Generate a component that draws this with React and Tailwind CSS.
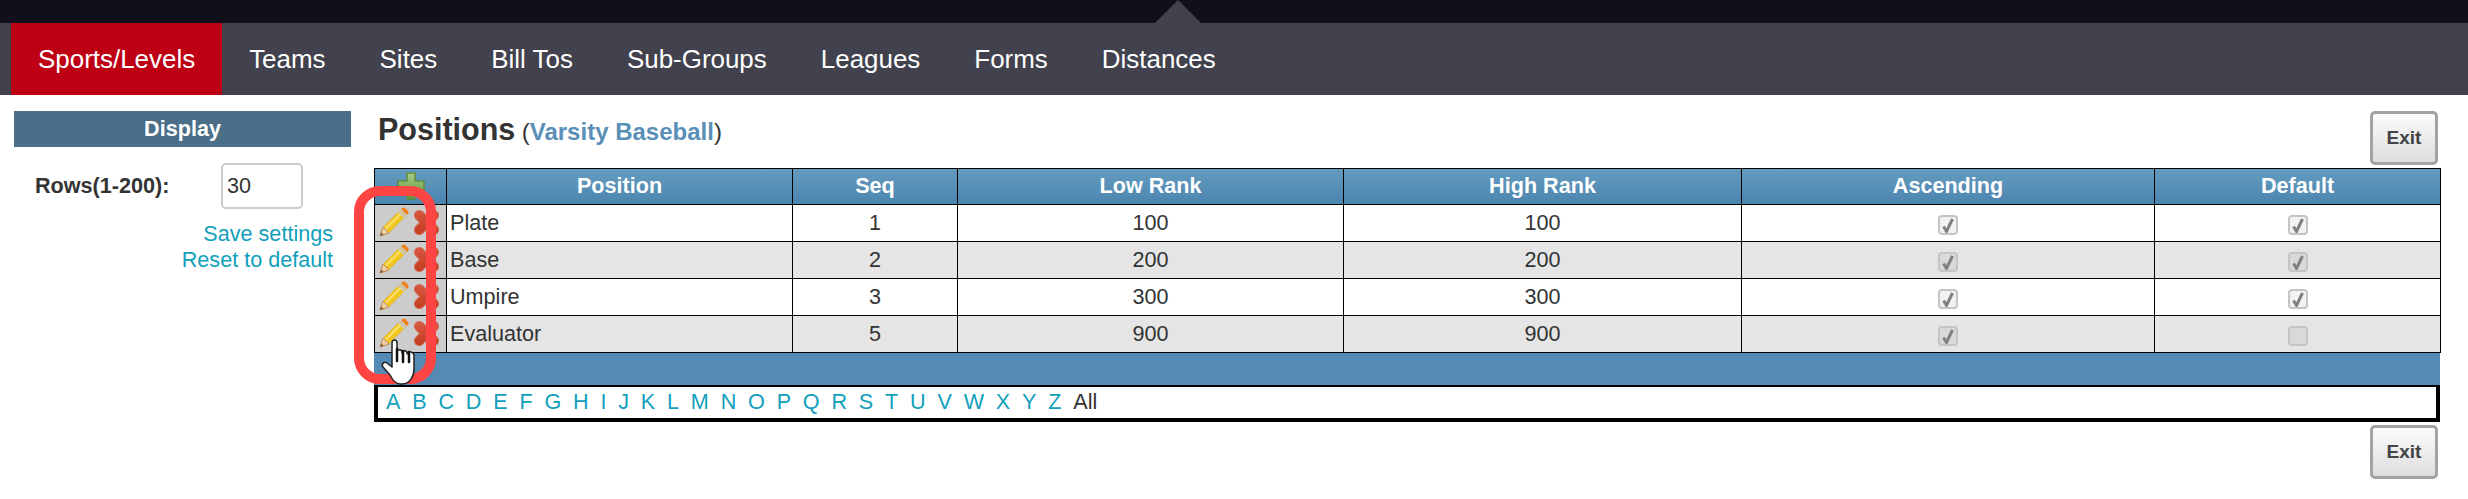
const tabs = ["Sports/Levels", "Teams", "Sites", "Bill Tos", "Sub-Groups", "Leagues", "Forms", "Distances"];

const rows = [
  { name: "Plate", seq: 1, low: 100, high: 100, asc: true, def: true },
  { name: "Base", seq: 2, low: 200, high: 200, asc: true, def: true },
  { name: "Umpire", seq: 3, low: 300, high: 300, asc: true, def: true },
  { name: "Evaluator", seq: 5, low: 900, high: 900, asc: true, def: false },
];

const letters = "ABCDEFGHIJKLMNOPQRSTUVWXYZ".split("");

const PlusIcon = () => (
  <svg width="30" height="30" viewBox="0 0 30 30" className="block">
    <defs>
      <linearGradient id="plusFill" x1="0" y1="0" x2="0" y2="1">
        <stop offset="0" stopColor="#a9c98a" />
        <stop offset="1" stopColor="#5f9a3a" />
      </linearGradient>
    </defs>
    <path d="M11 2h8v8h9v9h-9v9h-8v-9H2v-9h9z" fill="url(#plusFill)" stroke="#5f8f3c" strokeWidth="1.5" strokeLinejoin="round" />
  </svg>
);

const PencilIcon = () => (
  <svg width="30" height="30" viewBox="0 0 30 30" className="block shrink-0">
    <path d="M1 29l3-9L21 3l6 6L10 26z" fill="#f0c51e" stroke="#c9b98c" strokeWidth="0.8" />
    <path d="M6 21L21.5 5.5l1.5 1.5L7.5 22.5z" fill="#f8e06a" />
    <path d="M1 29l3-9 6 6z" fill="#eccfa5" stroke="#c08a55" strokeWidth="1" />
    <path d="M1 29l1.2-3.6 2.4 2.4z" fill="#8a5a30" />
    <path d="M22 2l6 6 .8-.8c1-1 1-2.5 0-3.5L26.5 1.3c-1-1-2.5-1-3.5 0z" fill="#ef7f1a" />
    <path d="M20.5 3.5l6 6-1.5 1.5-6-6z" fill="#c9c9c9" />
  </svg>
);

const DeleteIcon = () => (
  <svg width="27" height="27" viewBox="0 0 28 28" className="block shrink-0">
    <defs>
      <linearGradient id="xFill" gradientUnits="userSpaceOnUse" x1="0" y1="0" x2="0" y2="28">
        <stop offset="0" stopColor="#d95a42" />
        <stop offset="1" stopColor="#c23a20" />
      </linearGradient>
    </defs>
    <path d="M6.5 6.5l15 15M21.5 6.5l-15 15" fill="none" stroke="#d0644c" strokeWidth="11" strokeLinecap="round" />
    <path d="M6.5 6.5l15 15M21.5 6.5l-15 15" fill="none" stroke="url(#xFill)" strokeWidth="9" strokeLinecap="round" />
  </svg>
);

const HandCursor = () => (
  <svg width="36" height="48" viewBox="0 0 36 48" className="absolute left-[381px] top-[338px]">
    <path
      d="M11 5c0-4 5-4 5 0v9c0-3 5-3 5 0v1c0-3 5-3 5 0v1c0-3 6-3 7 1v14c0 7-4 15-12 15h-2c-5 0-8-5-10-9L2 29c-2-3 1-6 4-4l5 4z"
      fill="#fff"
      stroke="#222"
      strokeWidth="1.5"
      strokeLinejoin="round"
    />
    <path d="M16 11v12M22 13v11M28 14v10" stroke="#111" strokeWidth="2.5" strokeLinecap="round" />
  </svg>
);

const ExitButton = () => (
  <button className="w-[68px] h-[54px] rounded-[5px] border-[3px] border-[#a3a3a3] bg-gradient-to-b from-[#fbfbfb] to-[#dedede] text-[19px] font-bold text-[#444]">
    Exit
  </button>
);

// disabled checkbox, grey like the old browser look
const Check = ({ checked }) => (
  <div className="flex justify-center items-center h-[33px] pt-[4px]">
    <span className="flex w-[20px] h-[20px] items-center justify-center rounded-[4px] border-2 border-[#c4c4c4] bg-black/5">
      {checked && (
        <svg width="12" height="15" viewBox="0 0 12 15">
          <path d="M1.5 8.5l3 5L10.5 1" fill="none" stroke="#808080" strokeWidth="3" />
        </svg>
      )}
    </span>
  </div>
);

export default function App() {
  const th = "border border-black font-bold text-white text-[21.6px] text-center p-0";
  const td = "border border-black text-[21.6px] text-[#333] text-center p-0";
  const cellText = "h-[33px] leading-[31px]";

  return (
    <div className="relative w-[2468px] h-[499px] bg-white overflow-hidden font-['Liberation_Sans',Arial,sans-serif]">
      <div className="h-[23px] bg-[#0f101c]" />
      {/* little arrow on the nav */}
      <div className="absolute left-[1155px] top-0 w-[46px] h-[23px] bg-[#41424d] [clip-path:polygon(50%_0,100%_100%,0_100%)]" />
      <nav className="h-[72px] bg-[#41424d] pl-[11px] flex">
        {tabs.map((t, i) => (
          <a
            key={t}
            className={`flex items-center px-[27px] text-[25.95px] text-white ${i === 0 ? "bg-[#bd0013]" : ""}`}
          >
            {t}
          </a>
        ))}
      </nav>

      <div className="flex pt-[16px]">
        <aside className="w-[337px] ml-[14px] shrink-0">
          <div className="h-[36px] bg-[#4b6f89] text-white text-[21.6px] font-bold flex items-center justify-center">
            Display
          </div>
          <div className="flex items-center mt-[16px] ml-[21px]">
            <span className="w-[186px] text-[21.6px] font-bold text-[#333]">Rows(1-200):</span>
            <input
              readOnly
              value="30"
              className="w-[82px] h-[46px] border-2 border-[#ccc] rounded-[5px] px-[4px] text-[21.6px] text-[#333]"
            />
          </div>
          <div className="mt-[12px] pr-[18px] text-right text-[21.6px] leading-[26px] text-[#119fbc]">
            <div>Save settings</div>
            <div>Reset to default</div>
          </div>
        </aside>

        <main className="ml-[23px] w-[2066px]">
          <div className="flex justify-between items-start h-[57px] pr-[2px]">
            <h1 className="ml-[4px] -mt-[1px] text-[30.5px] font-bold text-[#333] leading-[38px]">
              Positions{" "}
              <span className="text-[24px] font-normal -ml-[2px]">
                (<span className="font-bold text-[#5a8fb8]">Varsity Baseball</span>)
              </span>
            </h1>
            <ExitButton />
          </div>

          <table className="w-[2066px] border-collapse table-fixed">
            <colgroup>
              <col className="w-[72px]" />
              <col className="w-[346px]" />
              <col className="w-[165px]" />
              <col className="w-[386px]" />
              <col className="w-[398px]" />
              <col className="w-[413px]" />
              <col className="w-[286px]" />
            </colgroup>
            <thead>
              <tr className="h-[36px] bg-gradient-to-b from-[#659bbf] to-[#4a85af]">
                <th className={th}>
                  <div className="flex justify-center -mt-[1px] h-[30px]">
                    <PlusIcon />
                  </div>
                </th>
                <th className={th}>Position</th>
                <th className={th}>Seq</th>
                <th className={th}>Low Rank</th>
                <th className={th}>High Rank</th>
                <th className={th}>Ascending</th>
                <th className={th}>Default</th>
              </tr>
            </thead>
            <tbody>
              {rows.map((r, i) => (
                <tr key={r.name} className={`h-[37px] ${i % 2 ? "bg-[#e5e5e5]" : "bg-white"}`}>
                  <td className="border border-black bg-[#cccccc] p-0">
                    <div className="flex items-center gap-[4px] pl-[4px] h-[30px] -mt-[2px]">
                      <PencilIcon />
                      <DeleteIcon />
                    </div>
                  </td>
                  <td className={`${td} text-left pl-[3px]`}><div className={cellText}>{r.name}</div></td>
                  <td className={td}><div className={cellText}>{r.seq}</div></td>
                  <td className={td}><div className={cellText}>{r.low}</div></td>
                  <td className={td}><div className={cellText}>{r.high}</div></td>
                  <td className={td}><Check checked={r.asc} /></td>
                  <td className={td}><Check checked={r.def} /></td>
                </tr>
              ))}
            </tbody>
          </table>

          <div className="h-[32px] bg-[#548ab3]" />
          <div className="h-[37px] border-x-[4px] border-b-[4px] border-t-[2px] border-black flex items-center pl-[8px] text-[21.6px] text-[#119fbc] gap-[11.8px]">
            {letters.map((l) => (
              <a key={l}>{l}</a>
            ))}
            <span className="text-[#333]">All</span>
          </div>
          <div className="flex justify-end mt-[3px] pr-[2px]">
            <ExitButton />
          </div>
        </main>
      </div>

      {/* red annotation drawn on the screenshot */}
      <div className="absolute left-[354px] top-[186px] w-[82px] h-[198px] rounded-[26px] border-[10px] border-[#ff4444]" />
      <HandCursor />
    </div>
  );
}
